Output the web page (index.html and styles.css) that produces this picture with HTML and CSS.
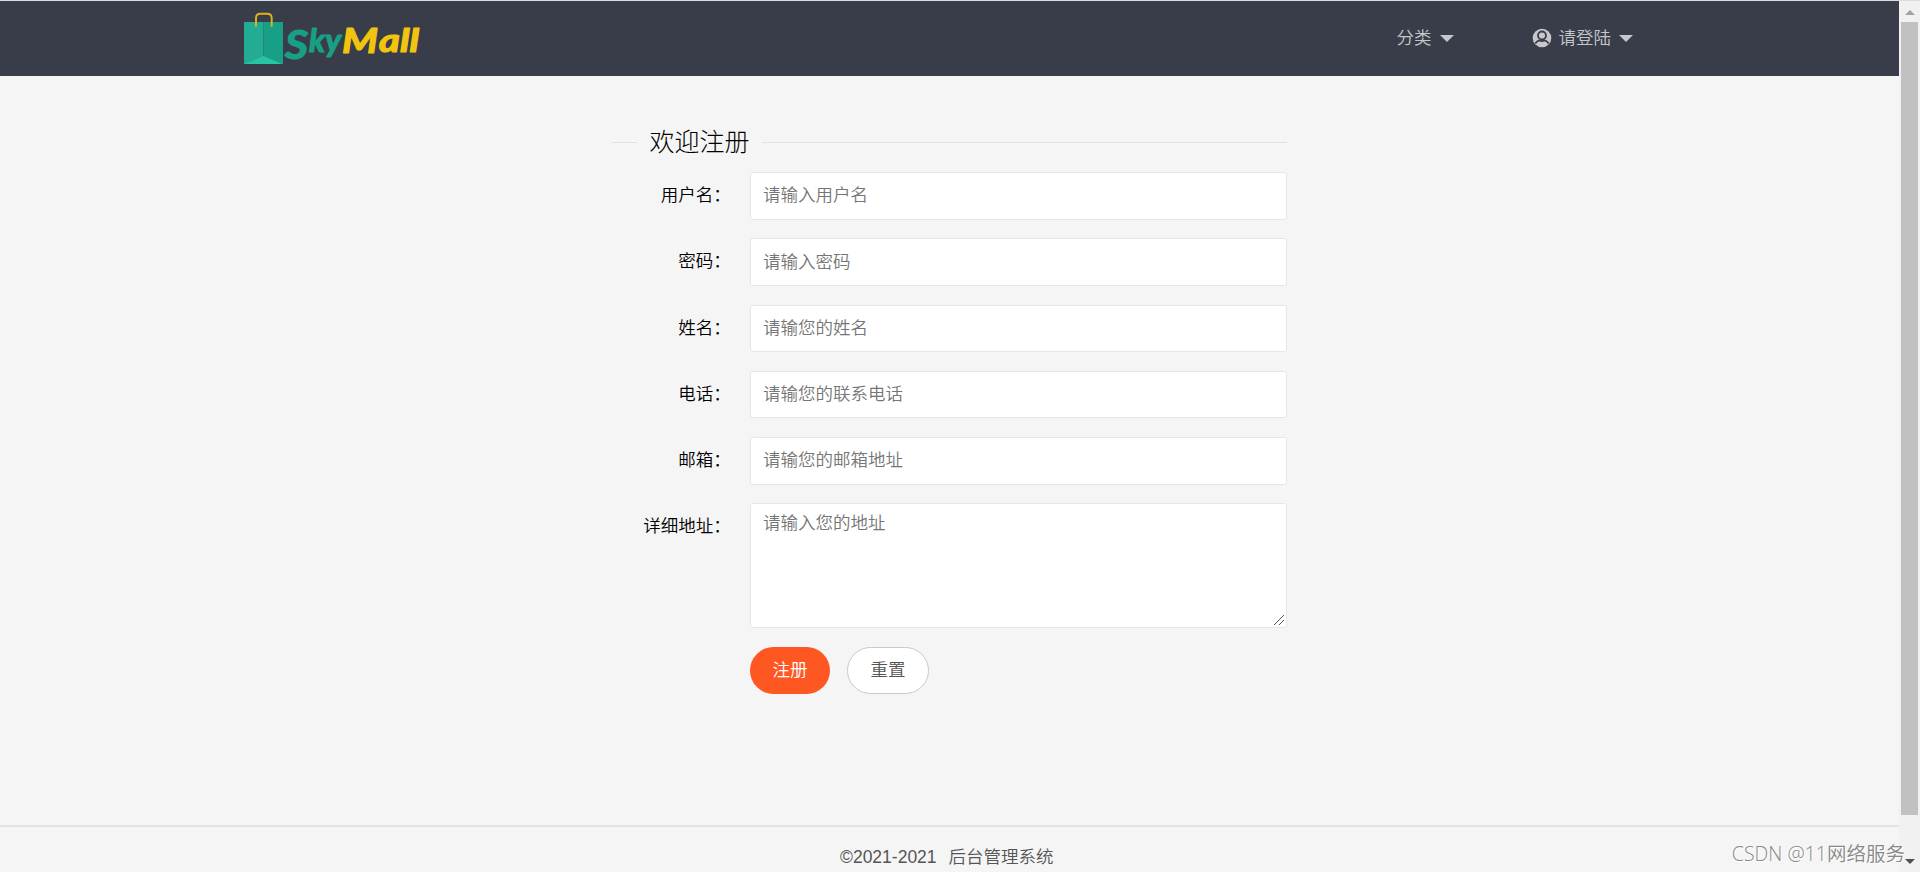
FILE: index.html
```html
<!DOCTYPE html>
<html lang="zh-CN">
<head>
  <meta charset="UTF-8">
  <title>SkyMall</title>
  <link rel="stylesheet" href="styles.css">
</head>
<body>
<div class="page">
  <div class="header">
    <a class="logo" href="#">
      <svg width="180" height="56" viewBox="0 0 180 56">
        <path d="M0 10H19.500V52H0z" fill="#24ab93"/>
        <path d="M19.500 10H39V52H19.500z" fill="#18a086"/>
        <path d="M1 52L19.500 44L38 52z" fill="#27c3a5"/>
        <path d="M12 14V6Q12 1.700 16.500 1.700H23Q27.700 1.700 27.700 6V14" fill="none" stroke="#e0b414" stroke-width="1.900" stroke-linecap="round"/>
        <g class="logo-text">
          <text class="sky" y="40"><tspan class="cap" x="41" y="47" textLength="23" lengthAdjust="spacingAndGlyphs">S</tspan><tspan x="65" y="40" textLength="32" lengthAdjust="spacingAndGlyphs">ky</tspan></text>
          <text class="mall" y="40"><tspan class="cap-m" x="98" y="41" textLength="36" lengthAdjust="spacingAndGlyphs">M</tspan><tspan x="135" y="40" textLength="40" lengthAdjust="spacingAndGlyphs">all</tspan></text>
        </g>
      </svg>
    </a>
    <ul class="nav">
      <li>分类<i class="caret"></i></li>
      <li>
        <svg class="user" width="20" height="20" viewBox="0 0 20 20">
          <circle cx="10" cy="10" r="9.300" fill="#c6c7ca"/>
          <circle cx="10" cy="7.500" r="4" fill="none" stroke="#393d49" stroke-width="1.800"/>
          <path d="M3.200 15.500Q5.500 12.500 7.500 12.300Q10 14 12.500 12.300Q14.500 12.500 16.800 15.500" fill="none" stroke="#393d49" stroke-width="1.800"/>
        </svg>
        请登陆<i class="caret"></i>
      </li>
    </ul>
  </div>

  <form class="main">
    <div class="title"><span>欢迎注册</span></div>
    <div class="item">
      <label>用户名：</label>
      <input type="text" placeholder="请输入用户名">
    </div>
    <div class="item">
      <label>密码：</label>
      <input type="password" placeholder="请输入密码">
    </div>
    <div class="item">
      <label>姓名：</label>
      <input type="text" placeholder="请输您的姓名">
    </div>
    <div class="item">
      <label>电话：</label>
      <input type="text" placeholder="请输您的联系电话">
    </div>
    <div class="item">
      <label>邮箱：</label>
      <input type="text" placeholder="请输您的邮箱地址">
    </div>
    <div class="item">
      <label>详细地址：</label>
      <textarea placeholder="请输入您的地址"></textarea>
      <svg class="grip" width="12" height="12" viewBox="0 0 12 12">
        <path d="M1 11L11 1M6 11L11 6" stroke="#555" stroke-width="1"/>
      </svg>
    </div>
    <div class="btns">
      <button class="btn btn-danger" type="submit">注册</button>
      <button class="btn btn-primary" type="reset">重置</button>
    </div>
  </form>

  <div class="footer">
    <span>©2021-2021</span>
    <span>后台管理系统</span>
  </div>
</div>

<div class="scrollbar">
  <i class="up"></i>
  <div class="thumb"></div>
  <i class="down"></i>
</div>
<div class="watermark">CSDN @11网络服务</div>
</body>
</html>
```

FILE: styles.css
```css
* {
  box-sizing: border-box;
}
body {
  margin: 0;
  height: 872px;
  display: flex;
  overflow: hidden;
  border-top: 1px solid #d9dde2;
  background: #f5f5f5;
  font: 350 17.5px/25px "Liberation Sans", "Noto Sans CJK SC", sans-serif;
  color: #000;
}
.page {
  flex: 1;
  display: flex;
  flex-direction: column;
}

/* header */
.header {
  height: 75px;
  padding: 0 266px 0 244px;
  background: #393d49;
  display: flex;
  justify-content: space-between;
}
.logo {
  padding-top: 11px;
}
.logo svg {
  display: block;
}
.logo-text {
  font-family: Lato, sans-serif;
  font-weight: 700;
  font-style: italic;
  font-size: 32px;
  stroke-width: 1.2;
  stroke-linejoin: round;
}
.cap {
  font-size: 40px;
}
.cap-m {
  font-size: 34px;
}
.sky {
  fill: #18a086;
  stroke: #18a086;
}
.mall {
  fill: #f1c40f;
  stroke: #f1c40f;
}
.nav {
  list-style: none;
  margin: 0;
  padding: 0;
  height: 75px;
  display: flex;
  align-items: center;
  gap: 78px;
  color: #c6c7ca;
}
.nav li {
  display: flex;
  align-items: center;
}
.user {
  margin: -1px 7px 0 0;
}
.caret {
  margin: 0 0 0 8px;
  border: 7.5px solid transparent;
  border-top-color: #c6c7ca;
  border-bottom: 0;
}

/* form */
.main {
  width: 675px;
  margin: 49px 0 0 612px;
}
.title {
  display: flex;
  align-items: center;
  height: 34px;
  margin-bottom: 13px;
  font-size: 25px;
  font-weight: 300;
}
.title::before,
.title::after {
  content: "";
  height: 1px;
  background: #e2e2e2;
}
.title::before {
  width: 25px;
}
.title::after {
  flex: 1;
}
.title span {
  padding: 1px 12.5px 0;
}
.item {
  display: flex;
  position: relative;
  margin-bottom: 18.75px;
}
.item label {
  width: 137.5px;
  padding: 11px 18.75px;
  text-align: right;
}
input,
textarea {
  flex: 1;
  height: 47.5px;
  padding: 0 12.5px;
  border: 1px solid #e6e6e6;
  border-radius: 2.5px;
  background: #fff;
  font: inherit;
  outline: none;
}
textarea {
  height: 125px;
  padding-top: 7px;
  resize: none;
}
input::placeholder,
textarea::placeholder {
  color: #757575;
}
.grip {
  position: absolute;
  right: 2px;
  bottom: 2px;
}
.btns {
  display: flex;
  gap: 17px;
  padding-left: 138px;
}
.btn {
  height: 47px;
  padding: 0;
  border: 0;
  border-radius: 24px;
  font: inherit;
}
.btn-danger {
  width: 80px;
  background: #ff5722;
  color: #fff;
}
.btn-primary {
  width: 82px;
  background: #fff;
  border: 1px solid #c9c9c9;
  color: #555;
}

/* footer */
.footer {
  height: 47px;
  margin-top: auto;
  padding: 18px 0 0 840px;
  border-top: 2px solid #e2e2e2;
  display: flex;
  gap: 12px;
  color: #555;
}

/* scrollbar */
.scrollbar {
  width: 21px;
  background: #f1f1f1;
  display: flex;
  flex-direction: column;
  align-items: center;
}
.scrollbar .up,
.scrollbar .down {
  border: 5px solid transparent;
}
.scrollbar .up {
  margin-top: 9px;
  border-top: 0;
  border-bottom-color: #a3a3a3;
}
.thumb {
  width: 17px;
  height: 793px;
  margin-top: 7px;
  background: #c1c1c1;
}
.scrollbar .down {
  margin-top: 44px;
  border-bottom: 0;
  border-top-color: #505050;
}
.watermark {
  position: absolute;
  right: 15px;
  bottom: 4px;
  font: 350 19.5px/28px "Open Sans", "Noto Sans CJK SC", sans-serif;
  color: #888;
  text-shadow: 1px 1px 0 #fff;
}
```
